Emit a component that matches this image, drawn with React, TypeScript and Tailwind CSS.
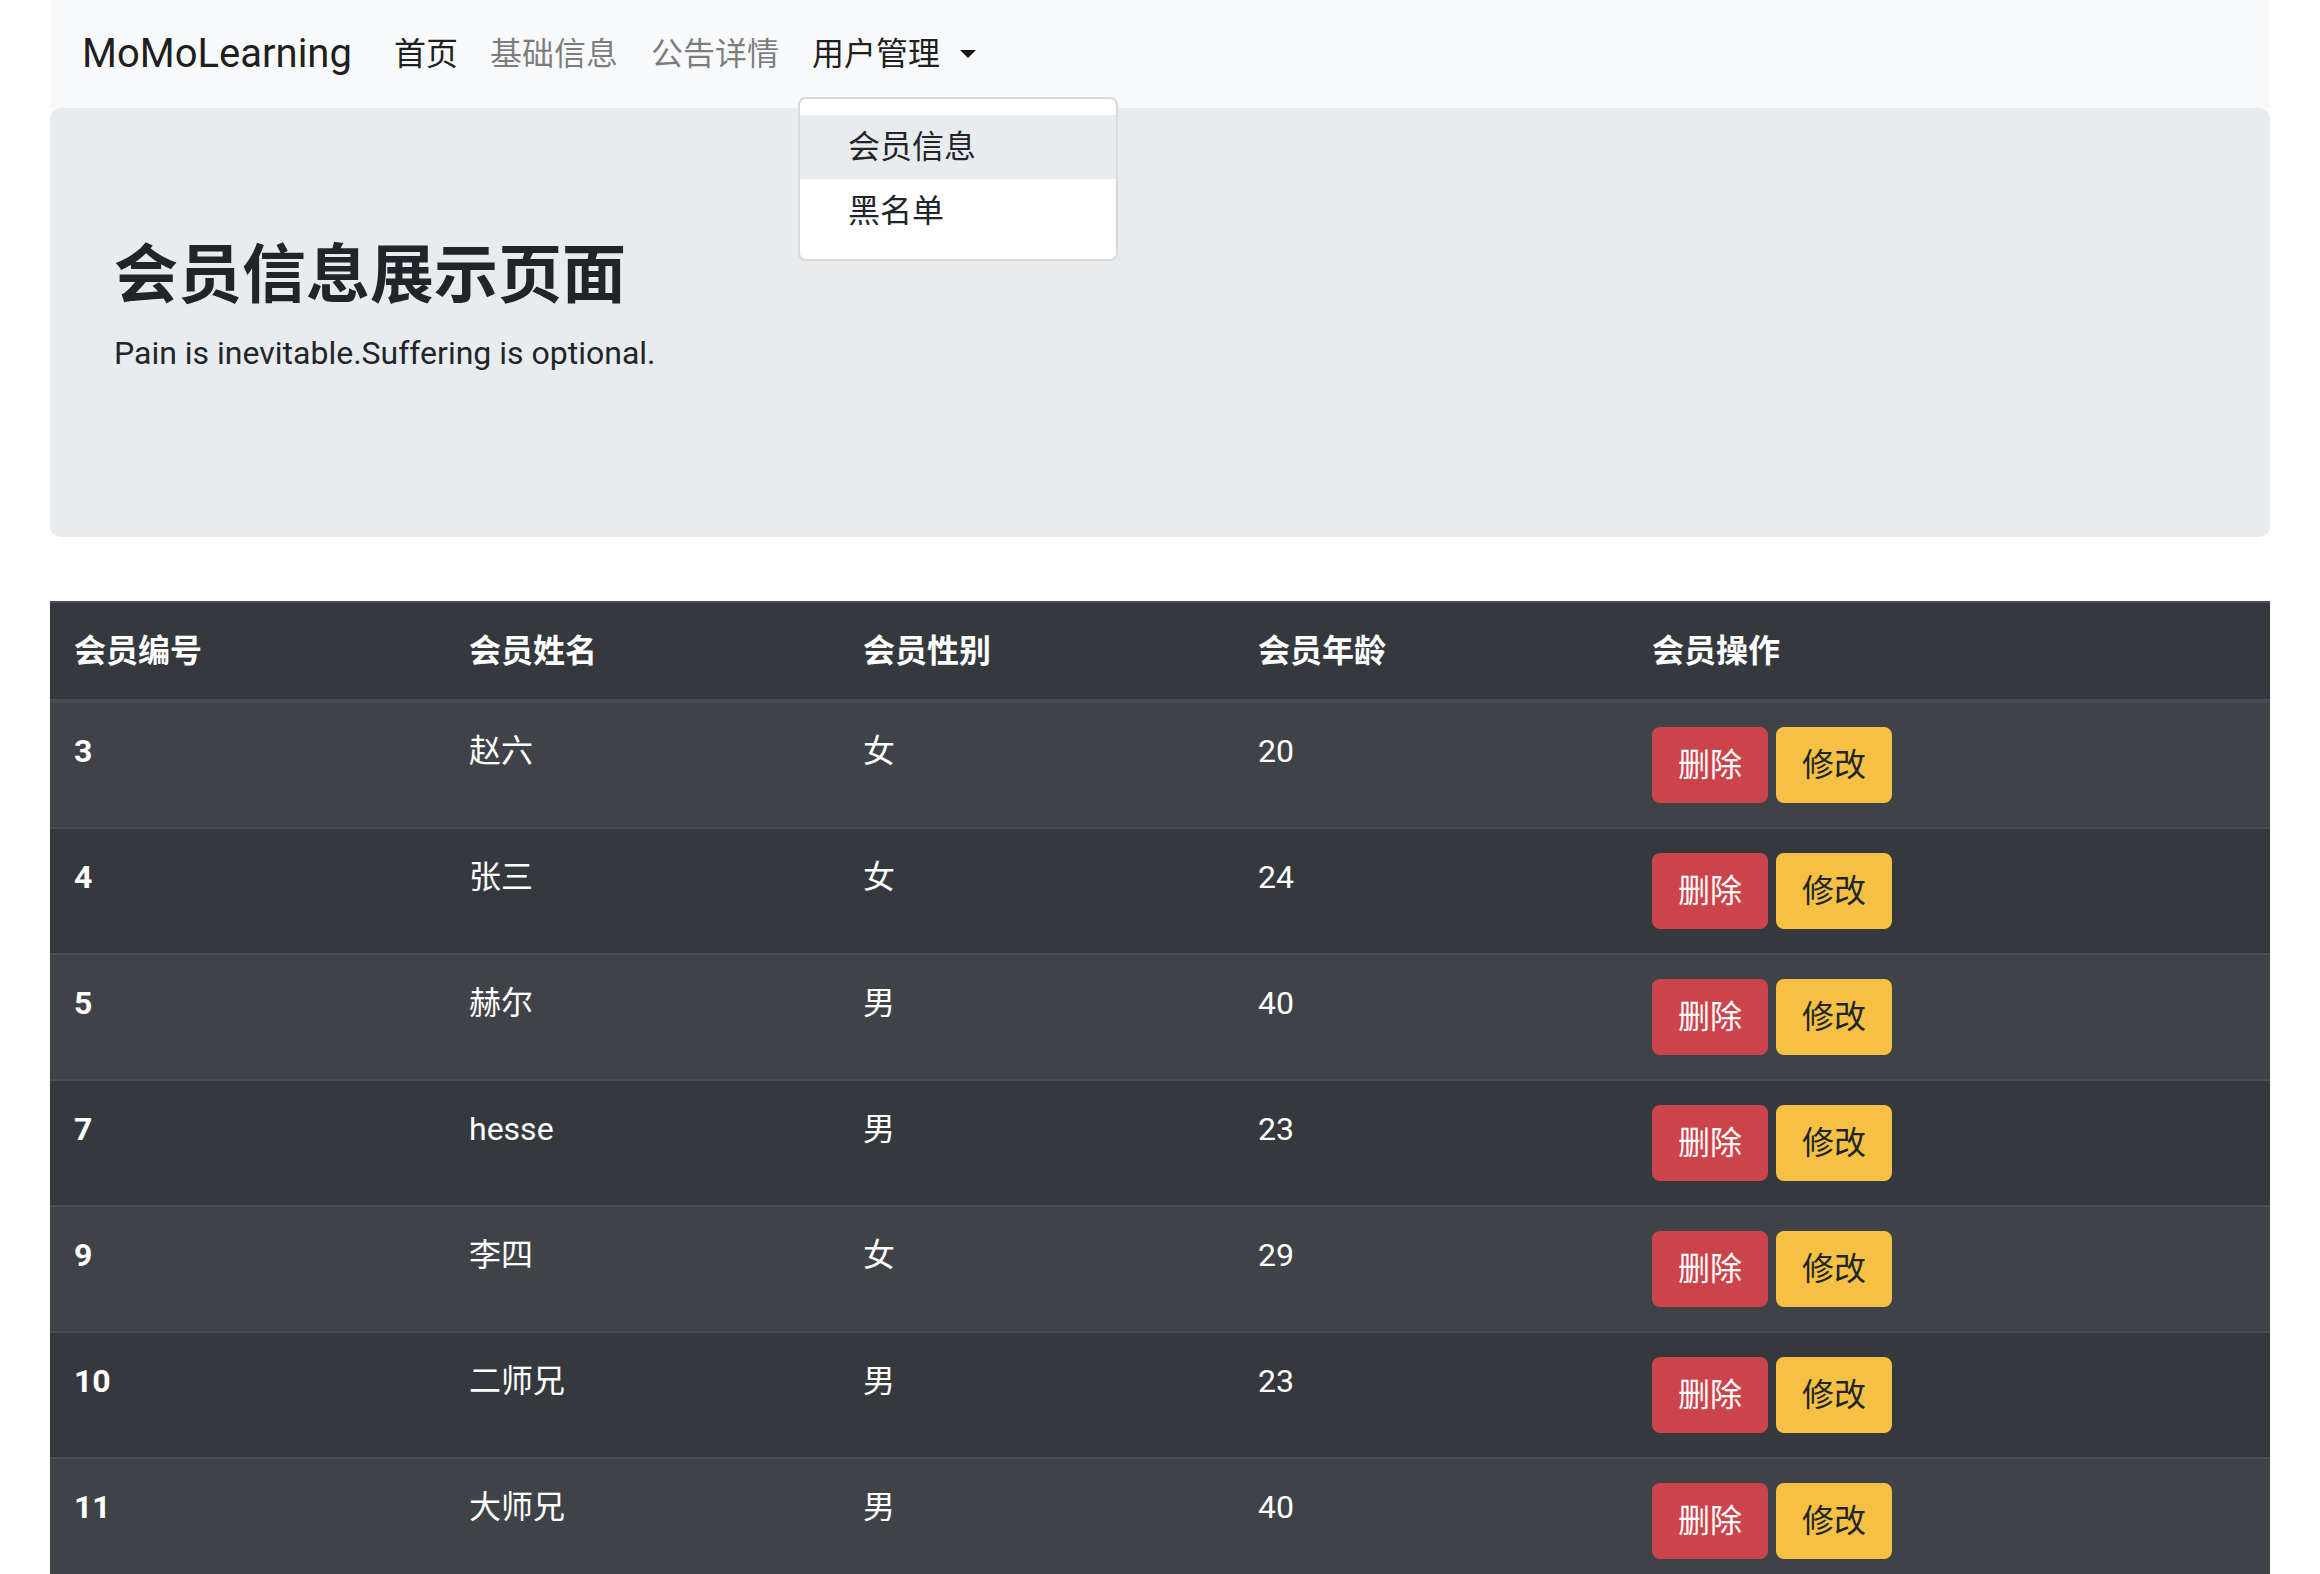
import React from "react";

const members = [
  { id: 3, name: "赵六", gender: "女", age: 20 },
  { id: 4, name: "张三", gender: "女", age: 24 },
  { id: 5, name: "赫尔", gender: "男", age: 40 },
  { id: 7, name: "hesse", gender: "男", age: 23 },
  { id: 9, name: "李四", gender: "女", age: 29 },
  { id: 10, name: "二师兄", gender: "男", age: 23 },
  { id: 11, name: "大师兄", gender: "男", age: 40 },
];

const headers = ["会员编号", "会员姓名", "会员性别", "会员年龄", "会员操作"];

function Navbar() {
  return (
    <nav className="relative flex h-[108px] items-center bg-[#f8f9fa] px-[32px]">
      <a className="mr-[26px] text-[40px] leading-[60px] text-black/90">MoMoLearning</a>
      <ul className="flex items-center text-[32px] leading-[48px]">
        <li>
          <a className="block px-[16px] py-[16px] text-black/90">首页</a>
        </li>
        <li>
          <a className="block px-[16px] py-[16px] text-black/50">基础信息</a>
        </li>
        <li>
          <a className="block px-[17px] py-[16px] text-black/50">公告详情</a>
        </li>
        <li className="relative">
          <a className="flex items-center px-[16px] py-[16px] text-black/90">
            用户管理
            <span className="ml-[20px] inline-block h-0 w-0 border-x-[8px] border-t-[8px] border-x-transparent border-t-black/90" />
          </a>
          <div className="absolute left-[2px] top-[calc(100%+3px)] z-10 w-[320px] rounded-[8px] border-2 border-black/15 bg-white py-[16px] text-[#212529]">
            <div className="bg-[#e9ecef] px-[48px] py-[8px]">会员信息</div>
            <div className="px-[48px] py-[8px]">黑名单</div>
          </div>
        </li>
      </ul>
    </nav>
  );
}

function Jumbotron() {
  return (
    <div className="mb-[64px] rounded-[10px] bg-[#e9ecef] px-[64px] py-[128px]">
      <h2 className="mb-[16px] pt-[3px] text-[64px] font-bold leading-[74px] text-[#212529]">会员信息展示页面</h2>
      <p className="mb-[32px] text-[32px] leading-[48px] text-[#212529]">Pain is inevitable.Suffering is optional.</p>
    </div>
  );
}

function MemberTable() {
  return (
    <table className="w-full table-fixed border-collapse bg-[#35393e] text-[32px] leading-[48px] text-white">
      <colgroup>
        <col className="w-[395px]" />
        <col className="w-[394px]" />
        <col className="w-[395px]" />
        <col className="w-[394px]" />
        <col />
      </colgroup>
      <thead>
        <tr>
          {headers.map((h) => (
            <th
              key={h}
              className="border-t-2 border-b-4 border-[#454d55] p-[24px] text-left align-bottom font-bold"
            >
              {h}
            </th>
          ))}
        </tr>
      </thead>
      <tbody>
        {members.map((m, i) => (
          <tr key={m.id} className={i % 2 === 0 ? "bg-[#3f4348]" : ""}>
            <th className="border-t-2 border-[#454d55] p-[24px] text-left align-top font-bold">{m.id}</th>
            <td className="border-t-2 border-[#454d55] p-[24px] align-top">{m.name}</td>
            <td className="border-t-2 border-[#454d55] p-[24px] align-top">{m.gender}</td>
            <td className="border-t-2 border-[#454d55] p-[24px] align-top">{m.age}</td>
            <td className="border-t-2 border-[#454d55] p-[24px] align-top">
              <div className="flex gap-[8px]">
                <button className="rounded-[8px] border-2 border-[#cc444b] bg-[#cc444b] px-[24px] py-[12px] leading-[48px] text-white">
                  删除
                </button>
                <button className="rounded-[8px] border-2 border-[#f6c142] bg-[#f6c142] px-[24px] py-[12px] leading-[48px] text-[#212529]">
                  修改
                </button>
              </div>
            </td>
          </tr>
        ))}
      </tbody>
    </table>
  );
}

export default function App() {
  return (
    <div className="min-h-screen bg-white px-[50px] font-[Roboto,'Noto_Sans_CJK_SC',sans-serif] text-[#212529]">
      <Navbar />
      <Jumbotron />
      <MemberTable />
    </div>
  );
}
